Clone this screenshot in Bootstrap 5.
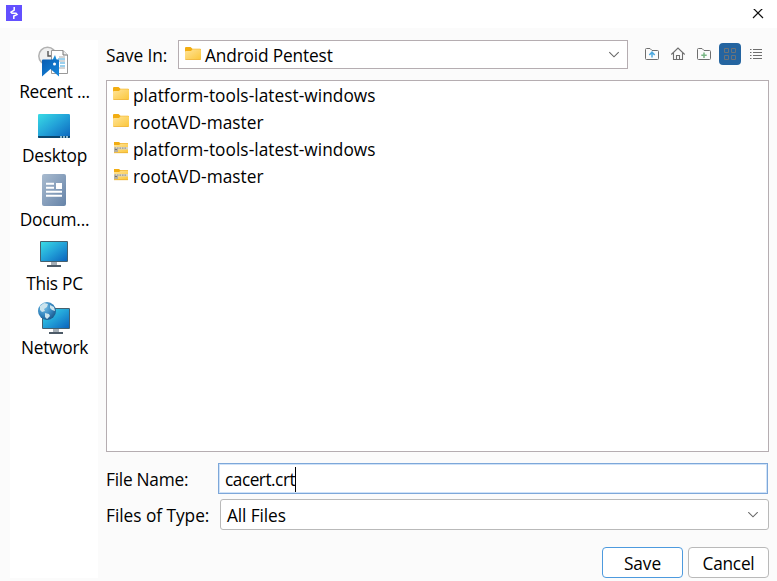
<!DOCTYPE html>
<html lang="en">
<head>
<meta charset="utf-8">
<title>Save</title>
<link href="https://cdn.jsdelivr.net/npm/bootstrap@5.3.0/dist/css/bootstrap.min.css" rel="stylesheet">
<style>
body{width:777px;height:581px;overflow:hidden;background:#fbfbfb;color:#000;font:17.3px/24px "Segoe UI","Open Sans","Noto Sans",sans-serif;letter-spacing:-.1px}
svg{display:block;flex:none}
.titlebar{height:28px;padding:5px 13px 0 6px}
.places{width:88px;height:538px;margin:12px 8px 0 10px;padding-top:6px}
.place{height:64px}
.place span{line-height:26px;margin-top:1px;padding-left:1px;letter-spacing:-.25px}
.main-pane{width:663px;padding-top:12px}
.look-in{height:29px}
.look-label{width:72px;padding-top:3px}
.look-box{width:450px;height:29px;border:1px solid #b5adb1;padding:1px 7px 0 6px}
.look-box span{padding-top:2px;letter-spacing:-.15px}
.tools{padding-left:14px;width:141px;height:24px}
.tool{width:22px;height:22px}
.tool.active{background:#2464a0;border-radius:4px;margin-left:-1px}
.files{height:372px;margin-top:11px;border:1px solid #b5adb1;padding:1px 0 0 6px;letter-spacing:.04px}
.file{height:27px;padding:0}
.file svg{margin-right:4px;margin-bottom:5px}
.name-row{height:31px;margin-top:11px}
.name-row label{width:112px;padding-top:2px;letter-spacing:-.25px}
.name-box{width:550px;height:31px;border:1px solid #7da7d9;box-shadow:inset 0 0 0 1px #cfe2f8;padding:2px 6px 0}
.name-box span{letter-spacing:-.5px}
.caret{width:1px;height:25px;background:#000}
.type-row{height:31px;margin-top:5px}
.type-row label{width:114px;padding-top:2px;letter-spacing:-.03px}
.type-box{width:549px;height:31px;border:1px solid #b9b9b9;border-radius:3px;padding:2px 9px 0 6px}
.actions{margin-top:17px;gap:5px}
.dlg-btn{width:81px;height:31px;padding:2px 0 0;background:#fff;border:1px solid #b9b9b9;border-radius:4px;font-size:inherit;letter-spacing:-.25px;line-height:24px;color:#000}
.dlg-btn.primary{border-color:#4d9ade;letter-spacing:-.1px}
</style>
<script src="https://cdn.jsdelivr.net/npm/bootstrap@5.3.0/dist/js/bootstrap.bundle.min.js"></script>
</head>
<body>
<svg width="0" height="0" class="position-absolute">
<defs>
<linearGradient id="gold" x1="0" y1="0" x2="1" y2="1"><stop stop-color="#ffe49a"/><stop offset="1" stop-color="#fbc638"/></linearGradient>
<linearGradient id="screen" x1="0" y1="0" x2="1" y2="1"><stop stop-color="#39dbe5"/><stop offset=".5" stop-color="#22a1d8"/><stop offset="1" stop-color="#0b64bd"/></linearGradient>
<linearGradient id="slate" x1="0" y1="0" x2="1" y2="1"><stop stop-color="#a9bbcf"/><stop offset="1" stop-color="#6583a8"/></linearGradient>
<linearGradient id="blue" x1="0" y1="0" x2="1" y2="1"><stop stop-color="#0a5db2"/><stop offset="1" stop-color="#1688dd"/></linearGradient>
<radialGradient id="ball" cx=".35" cy=".3" r=".75"><stop stop-color="#78c0e6"/><stop offset=".6" stop-color="#3384bd"/><stop offset="1" stop-color="#1c5689"/></radialGradient>
<symbol id="folder" viewBox="0 0 16 13"><path d="M0 1.2Q0 0 1 0H5.5L7.5 1.7H15Q16 1.7 16 2.7V6H0Z" fill="#f2ad12"/><path d="M0 5Q0 4 1 4H6L7.6 2.3H15Q16 2.3 16 3.2V12Q16 13 15 13H1Q0 13 0 12Z" fill="url(#gold)"/><path d="M.5 12.6H15.5" stroke="#eeb33d" stroke-width=".8"/></symbol>
<symbol id="zip" viewBox="0 0 16 13"><path d="M1 1H6L7.4 2.2H15V6H1Z" fill="#f2ad12"/><path d="M1 4H6L7.5 3H15V12H1Z" fill="url(#gold)"/><path d="M1 6H15V8.5H1Z" fill="#d9d4c4"/><path d="M1.5 7.2H14" stroke="#9c998c" stroke-width="1.2" stroke-dasharray="1.5 1"/><path d="M1 7.5H5V11H1Z" fill="#b5b0a2"/><path d="M2 8.5H4" stroke="#77756d"/><path d="M1 11.7H15" stroke="#e7ae34" stroke-width=".8"/></symbol>
</defs>
</svg>

<header class="titlebar bg-white d-flex justify-content-between">
<svg width="16" height="16" viewBox="0 0 16 16"><path d="M0 0H16V16H0Z" fill="#6350ff"/><path d="M8.2 2V5.2L5 7.2L6 8.3H10L11 9.4L7.8 11V14" fill="none" stroke="#fff" stroke-width="1.5"/></svg>
<svg width="12" height="12" viewBox="0 0 12 12" class="mt-1"><path d="M1-.5L11 9.5M11-.5L1 9.5" transform="translate(0 -.5)" fill="none" stroke="#111" stroke-width="1.2"/></svg>
</header>

<div class="d-flex">
<nav class="places bg-white d-flex flex-column">
<div class="place d-flex flex-column align-items-center">
<svg width="32" height="32" viewBox="0 0 32 32"><circle cx="9.5" cy="10" r="8.7" fill="#f0f0f0" stroke="#b2b2b2" stroke-width="1.5"/><path d="M10 5V10H14" fill="none" stroke="#555" stroke-width="1.4"/><path d="M13.5 4.5H25L29.5 9V27.5H13.5Z" fill="#fff" stroke="#999"/><path d="M25 4.5V9H29.5" fill="#eee" stroke="#777"/><path d="M21 11H27M21 15H27M21 22H27" stroke="#aaa"/><path d="M20 13H27M22 17H27M22 20H27" stroke="#36a2dd"/><path d="M14 15L17 9L19 15Z" fill="#188bd7"/><path d="M4 14.5Q4 13.5 5 13.5H20Q21 13.5 21 14.5V30.5L12.5 23L4 30.5Z" fill="url(#blue)"/><circle cx="16.5" cy="18" r="1.5" fill="#fff"/></svg>
<span>Recent ...</span></div>
<div class="place d-flex flex-column align-items-center">
<svg width="32" height="32" viewBox="0 0 32 32"><rect y="4" width="32" height="24" rx="1.3" fill="url(#screen)"/><path d="M0 26H32V27Q32 28 31 28H1Q0 28 0 27Z" fill="#09466f"/><path d="M22 27H24M25 27H27M28 27H30" stroke="#b8e0ee" stroke-width="1.3"/></svg>
<span>Desktop</span></div>
<div class="place d-flex flex-column align-items-center">
<svg width="32" height="32" viewBox="0 0 32 32"><rect x="4" width="24" height="32" rx="2" fill="url(#slate)"/><path d="M8 9.7H16M8 13.7H16M8 17.8H24M8 21.8H24" stroke="#fff" stroke-width="2"/><path d="M18 9H24V15H18Z" fill="#fff"/></svg>
<span>Docum...</span></div>
<div class="place d-flex flex-column align-items-center">
<svg width="32" height="32" viewBox="0 0 32 32"><rect x="2" y="3" width="28" height="21" rx="1" fill="#45606e"/><path d="M3 4H29V23H3Z" fill="url(#screen)"/><path d="M13 24H19V27H13Z" fill="#a5aeb6"/><path d="M9 27H23V29H9Z" fill="#4d5a67"/></svg>
<span>This PC</span></div>
<div class="place d-flex flex-column align-items-center">
<svg width="32" height="32" viewBox="0 0 32 32"><rect x="4" y="6" width="28" height="21" rx="1" fill="#45606e"/><path d="M5 7H31V26H5Z" fill="url(#screen)"/><path d="M15 27H21V30H15Z" fill="#a5aeb6"/><path d="M11 30H25V32H11Z" fill="#4d5a67"/><circle cx="9" cy="9" r="9" fill="url(#ball)"/><path d="M2 4L6 1L10 2L9 5L6 7L7 9L4 10L2 8ZM12 3L16 5L17 9L14 8L12 6ZM7 11L11 12L12 14L9 17L7 15Z" fill="#cce4ed"/></svg>
<span>Network</span></div>
</nav>

<main class="main-pane">
<div class="look-in d-flex align-items-center">
<label class="look-label">Save In:</label>
<div class="look-box bg-white d-flex align-items-center">
<svg width="16" height="13" class="me-1 mb-1"><use href="#folder"/></svg><span class="flex-grow-1">Android Pentest</span>
<svg width="12" height="8" viewBox="0 0 12 8"><path d="M1.3 1.2L6 5.8L10.7 1.2" fill="none" stroke="#666" stroke-width="1.1"/></svg>
</div>
<div class="tools d-flex gap-1">
<svg class="tool" viewBox="0 0 22 22"><path d="M3.5 15.5V6.5Q3.5 5.5 4.5 5.5H8L10 7.5H15.5Q16.5 7.5 16.5 8.5V15.5Q16.5 16.5 15.5 16.5H4.5Q3.5 16.5 3.5 15.5Z" fill="none" stroke="#6e6e6e"/><path d="M10 14.5V10M7.3 12L10 9.2L12.7 12" fill="none" stroke="#4da9df" stroke-width="1.5"/></svg>
<svg class="tool" viewBox="0 0 22 22"><path d="M3.3 11.5L10 5L16.7 11.5M5.5 10V16.5H14.5V10M8.5 16V12.5H11.5V16" fill="none" stroke="#6e6e6e" stroke-width="1.1"/></svg>
<svg class="tool" viewBox="0 0 22 22"><path d="M3.5 15.5V6.5Q3.5 5.5 4.5 5.5H8L10 7.5H15.5Q16.5 7.5 16.5 8.5V15.5Q16.5 16.5 15.5 16.5H4.5Q3.5 16.5 3.5 15.5Z" fill="none" stroke="#6e6e6e"/><path d="M10 9.5V15M7.3 12.2H12.7" fill="none" stroke="#77b583" stroke-width="1.5"/></svg>
<svg class="tool active" viewBox="0 0 22 22"><path d="M5.5 5.5H9.5V9.5H5.5ZM12.5 5.5H16.5V9.5H12.5ZM5.5 12.5H9.5V16.5H5.5ZM12.5 12.5H16.5V16.5H12.5Z" fill="none" stroke="#6c7379"/></svg>
<svg class="tool" viewBox="0 0 22 22"><path d="M5 6.5H6.5M5 9.5H6.5M5 12.5H6.5M5 15.5H6.5M8 6.5H17M8 9.5H17M8 12.5H17M8 15.5H17" stroke="#6e6e6e"/></svg>
</div>
</div>

<div class="files bg-white">
<div class="file d-flex align-items-center"><svg width="16" height="13"><use href="#folder"/></svg><span>platform-tools-latest-windows</span></div>
<div class="file d-flex align-items-center"><svg width="16" height="13"><use href="#folder"/></svg><span>rootAVD-master</span></div>
<div class="file d-flex align-items-center"><svg width="16" height="13"><use href="#zip"/></svg><span>platform-tools-latest-windows</span></div>
<div class="file d-flex align-items-center"><svg width="16" height="13"><use href="#zip"/></svg><span>rootAVD-master</span></div>
</div>

<div class="name-row d-flex align-items-center"><label>File Name:</label>
<div class="name-box bg-white d-flex align-items-center"><span>cacert.crt</span><i class="caret"></i></div></div>
<div class="type-row d-flex align-items-center"><label>Files of Type:</label>
<div class="type-box bg-white d-flex align-items-center justify-content-between"><span>All Files</span>
<svg width="12" height="8" viewBox="0 0 12 8"><path d="M1.3 .2L6 4.8L10.7 .2" fill="none" stroke="#666" stroke-width="1.1"/></svg></div></div>
<div class="actions d-flex justify-content-end"><button class="btn dlg-btn primary">Save</button><button class="btn dlg-btn">Cancel</button></div>
</main>
</div>
</body>
</html>
